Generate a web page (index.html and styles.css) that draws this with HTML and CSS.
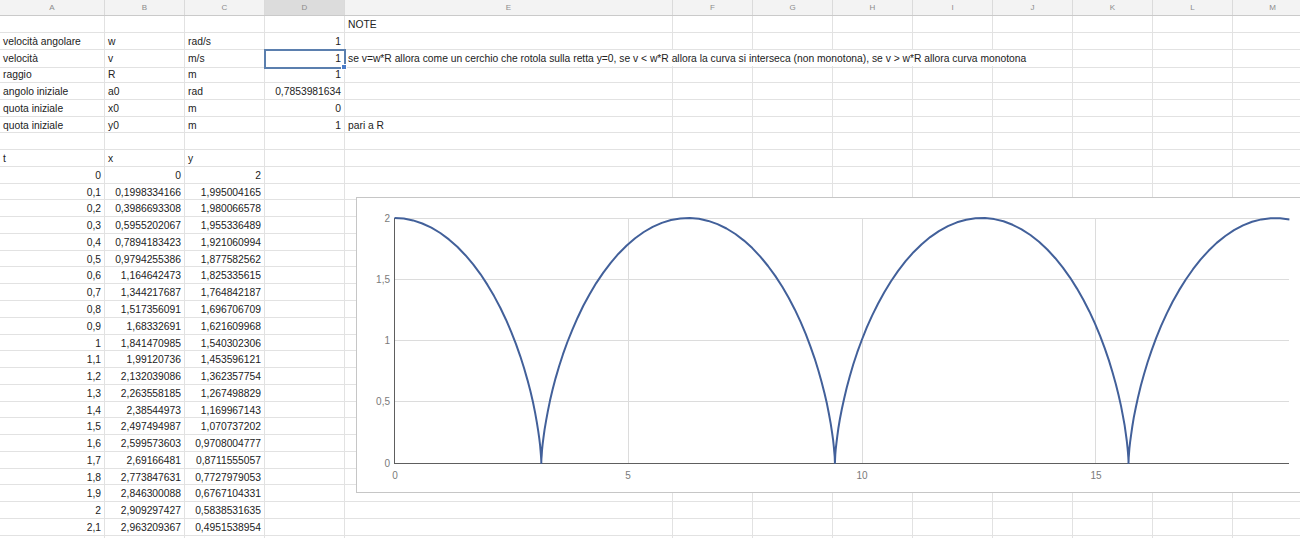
FILE: index.html
```html
<!DOCTYPE html>
<html lang="it">
<head>
  <meta charset="UTF-8">
  <title>Cicloide</title>
  <link rel="stylesheet" href="styles.css">
</head>
<body>
  <div class="sheet">
    <div class="head">
      <div>A</div><div>B</div><div>C</div><div class="on">D</div><div>E</div><div>F</div><div>G</div>
      <div>H</div><div>I</div><div>J</div><div>K</div><div>L</div><div>M</div>
    </div>

    <div class="row"><div class="c"></div><div class="c"></div><div class="c"></div><div class="c"></div><div class="c">NOTE</div><div class="rest"></div></div>
    <div class="row"><div class="c">velocità angolare</div><div class="c">w</div><div class="c">rad/s</div><div class="c n">1</div><div class="c"></div><div class="rest"></div></div>
    <div class="row spill"><div class="c">velocità</div><div class="c">v</div><div class="c">m/s</div><div class="c n sel">1</div><div class="c">se v=w*R allora come un cerchio che rotola sulla retta y=0, se v &lt; w*R allora la curva si interseca (non monotona), se v &gt; w*R allora curva monotona</div><div class="rest"></div></div>
    <div class="row"><div class="c">raggio</div><div class="c">R</div><div class="c">m</div><div class="c n">1</div><div class="c"></div><div class="rest"></div></div>
    <div class="row"><div class="c">angolo iniziale</div><div class="c">a0</div><div class="c">rad</div><div class="c n">0,7853981634</div><div class="c"></div><div class="rest"></div></div>
    <div class="row"><div class="c">quota iniziale</div><div class="c">x0</div><div class="c">m</div><div class="c n">0</div><div class="c"></div><div class="rest"></div></div>
    <div class="row"><div class="c">quota iniziale</div><div class="c">y0</div><div class="c">m</div><div class="c n">1</div><div class="c">pari a R</div><div class="rest"></div></div>
    <div class="row"><div class="c"></div><div class="c"></div><div class="c"></div><div class="c"></div><div class="c"></div><div class="rest"></div></div>
    <div class="row"><div class="c">t</div><div class="c">x</div><div class="c">y</div><div class="c"></div><div class="c"></div><div class="rest"></div></div>

    <div class="row"><div class="c n">0</div><div class="c n">0</div><div class="c n">2</div><div class="c"></div><div class="c"></div><div class="rest"></div></div>
    <div class="row"><div class="c n">0,1</div><div class="c n">0,1998334166</div><div class="c n">1,995004165</div><div class="c"></div><div class="c"></div><div class="rest"></div></div>
    <div class="row"><div class="c n">0,2</div><div class="c n">0,3986693308</div><div class="c n">1,980066578</div><div class="c"></div><div class="c"></div><div class="rest"></div></div>
    <div class="row"><div class="c n">0,3</div><div class="c n">0,5955202067</div><div class="c n">1,955336489</div><div class="c"></div><div class="c"></div><div class="rest"></div></div>
    <div class="row"><div class="c n">0,4</div><div class="c n">0,7894183423</div><div class="c n">1,921060994</div><div class="c"></div><div class="c"></div><div class="rest"></div></div>
    <div class="row"><div class="c n">0,5</div><div class="c n">0,9794255386</div><div class="c n">1,877582562</div><div class="c"></div><div class="c"></div><div class="rest"></div></div>
    <div class="row"><div class="c n">0,6</div><div class="c n">1,164642473</div><div class="c n">1,825335615</div><div class="c"></div><div class="c"></div><div class="rest"></div></div>
    <div class="row"><div class="c n">0,7</div><div class="c n">1,344217687</div><div class="c n">1,764842187</div><div class="c"></div><div class="c"></div><div class="rest"></div></div>
    <div class="row"><div class="c n">0,8</div><div class="c n">1,517356091</div><div class="c n">1,696706709</div><div class="c"></div><div class="c"></div><div class="rest"></div></div>
    <div class="row"><div class="c n">0,9</div><div class="c n">1,68332691</div><div class="c n">1,621609968</div><div class="c"></div><div class="c"></div><div class="rest"></div></div>
    <div class="row"><div class="c n">1</div><div class="c n">1,841470985</div><div class="c n">1,540302306</div><div class="c"></div><div class="c"></div><div class="rest"></div></div>
    <div class="row"><div class="c n">1,1</div><div class="c n">1,99120736</div><div class="c n">1,453596121</div><div class="c"></div><div class="c"></div><div class="rest"></div></div>
    <div class="row"><div class="c n">1,2</div><div class="c n">2,132039086</div><div class="c n">1,362357754</div><div class="c"></div><div class="c"></div><div class="rest"></div></div>
    <div class="row"><div class="c n">1,3</div><div class="c n">2,263558185</div><div class="c n">1,267498829</div><div class="c"></div><div class="c"></div><div class="rest"></div></div>
    <div class="row"><div class="c n">1,4</div><div class="c n">2,38544973</div><div class="c n">1,169967143</div><div class="c"></div><div class="c"></div><div class="rest"></div></div>
    <div class="row"><div class="c n">1,5</div><div class="c n">2,497494987</div><div class="c n">1,070737202</div><div class="c"></div><div class="c"></div><div class="rest"></div></div>
    <div class="row"><div class="c n">1,6</div><div class="c n">2,599573603</div><div class="c n">0,9708004777</div><div class="c"></div><div class="c"></div><div class="rest"></div></div>
    <div class="row"><div class="c n">1,7</div><div class="c n">2,69166481</div><div class="c n">0,8711555057</div><div class="c"></div><div class="c"></div><div class="rest"></div></div>
    <div class="row"><div class="c n">1,8</div><div class="c n">2,773847631</div><div class="c n">0,7727979053</div><div class="c"></div><div class="c"></div><div class="rest"></div></div>
    <div class="row"><div class="c n">1,9</div><div class="c n">2,846300088</div><div class="c n">0,6767104331</div><div class="c"></div><div class="c"></div><div class="rest"></div></div>
    <div class="row"><div class="c n">2</div><div class="c n">2,909297427</div><div class="c n">0,5838531635</div><div class="c"></div><div class="c"></div><div class="rest"></div></div>
    <div class="row"><div class="c n">2,1</div><div class="c n">2,963209367</div><div class="c n">0,4951538954</div><div class="c"></div><div class="c"></div><div class="rest"></div></div>
    <div class="row"><div class="c n">2,2</div><div class="c n">3,008496404</div><div class="c n">0,4114988827</div><div class="c"></div><div class="c"></div><div class="rest"></div></div>

    <!-- grafico sopra le celle -->
    <div class="chart">
      <svg width="978" height="294" viewBox="0 0 978 294">
        <g class="grid">
          <line x1="37.5" y1="20.5" x2="932" y2="20.5"/>
          <line x1="37.5" y1="81.5" x2="932" y2="81.5"/>
          <line x1="37.5" y1="142.5" x2="932" y2="142.5"/>
          <line x1="37.5" y1="203.5" x2="932" y2="203.5"/>
          <line x1="271.5" y1="20" x2="271.5" y2="265"/>
          <line x1="505.5" y1="20" x2="505.5" y2="265"/>
          <line x1="738.5" y1="20" x2="738.5" y2="265"/>
        </g>
        <g class="axis">
          <line x1="37.5" y1="20" x2="37.5" y2="265.5"/>
          <line x1="37" y1="265.5" x2="932" y2="265.5"/>
        </g>
        <g class="lbl" text-anchor="end">
          <text x="33" y="24">2</text>
          <text x="33" y="85">1,5</text>
          <text x="33" y="146">1</text>
          <text x="33" y="207">0,5</text>
          <text x="33" y="269">0</text>
        </g>
        <g class="lbl" text-anchor="middle">
          <text x="38" y="281">0</text>
          <text x="271" y="281">5</text>
          <text x="505" y="281">10</text>
          <text x="739" y="281">15</text>
        </g>
        <polyline id="curve" class="curve" points=""/>
      </svg>
    </div>
  </div>

  <script src="chart.js"></script>
</body>
</html>
```

FILE: styles.css
```css
body { margin: 0; overflow: hidden; background: #fff; color: #222; font-family: "Liberation Sans", Arial, sans-serif; font-size: 10.3px; }
.sheet { position: relative; width: 1300px; }

.head { display: grid; grid-template-columns: 105px 80px 80px 80px 328px repeat(8, 80px); height: 16px; box-sizing: border-box; background: #f3f3f3; border-bottom: 1px solid #cacaca; }
.head div { border-right: 1px solid #dadada; text-align: center; line-height: 15px; font-size: 8px; color: #8c8c8c; }
.head .on { background: #dcdcdc; }

.row { display: grid; grid-template-columns: 105px 80px 80px 80px 328px 1fr; height: 16.77px; }
.row.spill { grid-template-columns: 105px 80px 80px 80px 728px 1fr; }
.c { box-sizing: border-box; border-right: 1px solid #e2e2e2; border-bottom: 1px solid #e2e2e2; padding: 1px 3px 0; line-height: 16px; white-space: nowrap; overflow: hidden; }
.n { text-align: right; }
.rest { border-bottom: 1px solid #e2e2e2; background: repeating-linear-gradient(to right, transparent 0 79px, #e2e2e2 79px 80px); }

.sel { position: relative; overflow: visible; outline: 2px solid #5b7fae; outline-offset: -1px; }
.sel::after { content: ""; position: absolute; right: -3px; bottom: -3px; width: 4px; height: 4px; background: #4a7cc9; border: 1px solid #fff; }

.chart { position: absolute; left: 356px; top: 197px; width: 980px; height: 296px; box-sizing: border-box; border: 1px solid #c6c6c6; background: #fff; }
.chart svg { display: block; }
.grid line { stroke: #dcdcdc; stroke-width: 1; }
.axis line { stroke: #5e5e5e; stroke-width: 1; }
.lbl text { font-family: "Liberation Sans", Arial, sans-serif; font-size: 10px; fill: #7a7a7a; }
.curve { fill: none; stroke: #42609a; stroke-width: 2; stroke-linejoin: round; }
```

FILE: chart.js
```js
// x = t + sin t, y = 1 + cos t, t da 0 a 19
const pts = [];
for (let i = 0; i <= 190; i++) {
  const t = i / 10;
  const x = t + Math.sin(t);
  const y = 1 + Math.cos(t);
  pts.push((37.5 + x * 46.73).toFixed(1) + ',' + (265 - y * 122.5).toFixed(1));
}
document.getElementById('curve').setAttribute('points', pts.join(' '));
```
